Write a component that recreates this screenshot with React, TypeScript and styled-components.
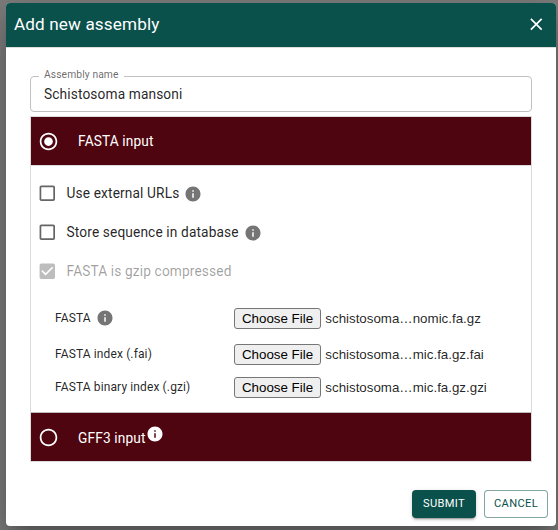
import React from 'react'
import styled, { createGlobalStyle } from 'styled-components'
import {
  MdCheckBox,
  MdCheckBoxOutlineBlank,
  MdClose,
  MdInfo,
  MdRadioButtonChecked,
  MdRadioButtonUnchecked,
} from 'react-icons/md'

const GlobalStyle = createGlobalStyle`
  *, *::before, *::after { box-sizing: border-box; }
  body {
    margin: 0;
    font-family: Roboto, 'Liberation Sans', sans-serif;
    color: rgba(0, 0, 0, 0.87);
  }
`

const Backdrop = styled.div`
  height: 530px;
  padding: 3px 2px 4px 6px;
  overflow: hidden;
  background: #7c7c7c;
`

const Dialog = styled.div`
  display: flex;
  flex-direction: column;
  height: 523px;
  border-radius: 4px;
  overflow: hidden;
  background: #fff;
  box-shadow: 0 11px 15px -7px rgba(0, 0, 0, 0.2),
    0 24px 38px 3px rgba(0, 0, 0, 0.14), 0 9px 46px 8px rgba(0, 0, 0, 0.12);
`

const Header = styled.header`
  display: flex;
  align-items: center;
  justify-content: space-between;
  height: 44px;
  flex: none;
  padding: 0 9px 0 8px;
  color: #fff;
  background: #0a504b;
`

const Title = styled.h2`
  margin: 0 0 2px;
  font-size: 17.14px;
  font-weight: 400;
  line-height: 24px;
  letter-spacing: 0.13px;
`

const CloseButton = styled.button`
  display: flex;
  margin-bottom: 1.5px;
  padding: 0;
  border: 0;
  color: inherit;
  background: none;
  font-size: 20.57px;
`

const Content = styled.div`
  padding: 20px 24px 0;
  border-top: 1px solid #dedede;
`

const Field = styled.fieldset`
  height: 44px;
  margin: 0;
  padding: 0 8px;
  border: 1px solid #c0c0c0;
  border-radius: 4px;
`

const FieldLabel = styled.legend`
  height: 16px;
  padding: 0 5px;
  color: rgba(0, 0, 0, 0.6);
  font-size: 10.29px;
  line-height: 13px;
  letter-spacing: 0.1px;
`

const FieldInput = styled.input`
  display: block;
  width: 100%;
  height: 19px;
  margin-top: 1px;
  padding: 0 5px;
  border: 0;
  outline: 0;
  color: inherit;
  background: none;
  font: 400 13.71px/19px Roboto, 'Liberation Sans', sans-serif;
  letter-spacing: 0.13px;
`

const Accordion = styled.section`
  margin-top: 4px;
  border: 1px solid #dbdbdb;
`

const Summary = styled.div`
  display: flex;
  align-items: center;
  height: 48px;
  padding-left: 7px;
  color: #fff;
  background: #4f0510;
`

const SummaryLabel = styled.span<{ $withInfo?: boolean }>`
  display: flex;
  margin-left: 19.1px;
  padding-top: ${p => (p.$withInfo ? '2px' : '0')};
  font-size: 13.71px;
  line-height: 20px;
  letter-spacing: 0.13px;
`

const ControlIcon = styled.span<{ $color?: string }>`
  display: flex;
  color: ${p => p.$color ?? 'inherit'};
  font-size: 20.57px;
`

const RadioIcon = styled(ControlIcon)`
  padding-top: 1px;
  font-size: 21px;
`

const InfoIcon = styled(MdInfo)<{ $raised?: boolean }>`
  flex: none;
  width: 18px;
  height: 18px;
  color: ${p => (p.$raised ? '#fff' : '#757575')};
  margin: ${p => (p.$raised ? '-3px 0 0' : '0 0 0 5px')};
`

const Details = styled.div`
  height: 248px;
  padding: 8px 0 0 6px;
  border-top: 1px solid #dbdbdb;
  border-bottom: 1px solid #bdbdbd;
`

const CheckRow = styled.label<{ $disabled?: boolean }>`
  display: flex;
  align-items: center;
  height: 39px;
  color: ${p => (p.$disabled ? 'rgba(0, 0, 0, 0.38)' : 'inherit')};
  font-size: 13.71px;
  letter-spacing: 0.13px;
`

const CheckLabel = styled.span`
  margin: 0 0 2px 9px;
`

const FileList = styled.div`
  display: grid;
  grid-template-columns: 179px 1fr;
  grid-template-rows: 39px 33px 33px;
  align-items: center;
  margin-top: 8px;
  padding-left: 18px;
`

const FileLabel = styled.span`
  display: flex;
  align-items: center;
  height: 21px;
  margin-bottom: 2px;
  font-size: 12px;
  letter-spacing: 0.12px;
`

const FilePicker = styled.div`
  display: flex;
  align-items: center;
  font: 13.333px 'Liberation Sans', Arial, sans-serif;
`

const ChooseButton = styled.button`
  width: 87px;
  height: 21px;
  padding: 0;
  margin-right: 4.3px;
  border: 1px solid #767676;
  border-radius: 3px;
  color: #000;
  background: #efefef;
  font: inherit;
`

const Actions = styled.footer`
  display: flex;
  justify-content: flex-end;
  gap: 8px;
  margin-top: auto;
  padding: 8px;
`

const ActionButton = styled.button<{ $primary?: boolean }>`
  width: 64px;
  height: 28px;
  padding: 0;
  border: ${p => (p.$primary ? '0' : '1px solid rgba(10, 80, 75, 0.5)')};
  border-radius: 4px;
  color: ${p => (p.$primary ? '#fff' : '#0a504b')};
  background: ${p => (p.$primary ? '#0a504b' : '#fff')};
  box-shadow: ${p =>
    p.$primary
      ? '0 3px 1px -2px rgba(0,0,0,.2), 0 2px 2px rgba(0,0,0,.14), 0 1px 5px rgba(0,0,0,.12)'
      : 'none'};
  font: 400 11.14px/20px Roboto, 'Liberation Sans', sans-serif;
  letter-spacing: 0.34px;
`

const files = [
  { label: 'FASTA', name: 'schistosoma…nomic.fa.gz', info: true },
  { label: 'FASTA index (.fai)', name: 'schistosoma…mic.fa.gz.fai' },
  { label: 'FASTA binary index (.gzi)', name: 'schistosoma…mic.fa.gz.gzi' },
]

export default function App() {
  return (
    <>
      <GlobalStyle />
      <Backdrop>
        <Dialog role="dialog" aria-label="Add new assembly">
          <Header>
            <Title>Add new assembly</Title>
            <CloseButton aria-label="Close">
              <MdClose />
            </CloseButton>
          </Header>
          <Content>
            <Field>
              <FieldLabel>Assembly name</FieldLabel>
              <FieldInput aria-label="Assembly name" defaultValue="Schistosoma mansoni" />
            </Field>
            <Accordion>
              <Summary>
                <RadioIcon><MdRadioButtonChecked /></RadioIcon>
                <SummaryLabel>FASTA input</SummaryLabel>
              </Summary>
              <Details>
                <CheckRow>
                  <ControlIcon $color="#666"><MdCheckBoxOutlineBlank /></ControlIcon>
                  <CheckLabel>Use external URLs</CheckLabel>
                  <InfoIcon />
                </CheckRow>
                <CheckRow>
                  <ControlIcon $color="#666"><MdCheckBoxOutlineBlank /></ControlIcon>
                  <CheckLabel>Store sequence in database</CheckLabel>
                  <InfoIcon />
                </CheckRow>
                <CheckRow $disabled>
                  <ControlIcon $color="#bdbdbd"><MdCheckBox /></ControlIcon>
                  <CheckLabel>FASTA is gzip compressed</CheckLabel>
                </CheckRow>
                <FileList>
                  {files.map(file => (
                    <React.Fragment key={file.label}>
                      <FileLabel>
                        {file.label}
                        {file.info && <InfoIcon />}
                      </FileLabel>
                      <FilePicker>
                        <ChooseButton>Choose File</ChooseButton>
                        {file.name}
                      </FilePicker>
                    </React.Fragment>
                  ))}
                </FileList>
              </Details>
              <Summary>
                <RadioIcon><MdRadioButtonUnchecked /></RadioIcon>
                <SummaryLabel $withInfo>
                  GFF3 input
                  <InfoIcon $raised />
                </SummaryLabel>
              </Summary>
            </Accordion>
          </Content>
          <Actions>
            <ActionButton $primary>SUBMIT</ActionButton>
            <ActionButton>CANCEL</ActionButton>
          </Actions>
        </Dialog>
      </Backdrop>
    </>
  )
}
